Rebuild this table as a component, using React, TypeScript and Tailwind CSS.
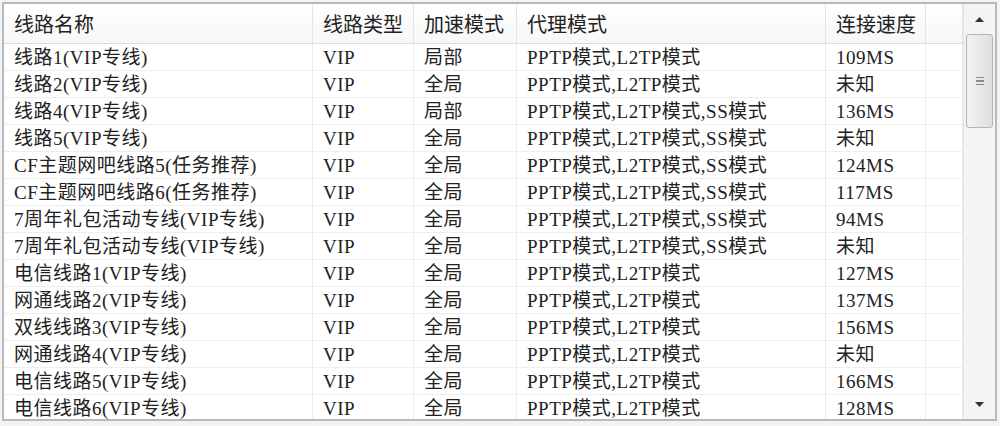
const columns = [
  { title: '线路名称', width: 'w-[309px]' },
  { title: '线路类型', width: 'w-[101px]' },
  { title: '加速模式', width: 'w-[103px]' },
  { title: '代理模式', width: 'w-[309px]' },
  { title: '连接速度', width: 'w-[100px]' },
]

const two = 'PPTP模式,L2TP模式'
const three = 'PPTP模式,L2TP模式,SS模式'

const lines = [
  ['线路1(VIP专线)', 'VIP', '局部', two, '109MS'],
  ['线路2(VIP专线)', 'VIP', '全局', two, '未知'],
  ['线路4(VIP专线)', 'VIP', '局部', three, '136MS'],
  ['线路5(VIP专线)', 'VIP', '全局', three, '未知'],
  ['CF主题网吧线路5(任务推荐)', 'VIP', '全局', three, '124MS'],
  ['CF主题网吧线路6(任务推荐)', 'VIP', '全局', three, '117MS'],
  ['7周年礼包活动专线(VIP专线)', 'VIP', '全局', three, '94MS'],
  ['7周年礼包活动专线(VIP专线)', 'VIP', '全局', three, '未知'],
  ['电信线路1(VIP专线)', 'VIP', '全局', two, '127MS'],
  ['网通线路2(VIP专线)', 'VIP', '全局', two, '137MS'],
  ['双线线路3(VIP专线)', 'VIP', '全局', two, '156MS'],
  ['网通线路4(VIP专线)', 'VIP', '全局', two, '未知'],
  ['电信线路5(VIP专线)', 'VIP', '全局', two, '166MS'],
  ['电信线路6(VIP专线)', 'VIP', '全局', two, '128MS'],
]

function ScrollBar() {
  return (
    <div className="w-[32px] shrink-0 h-full flex flex-col border-l border-[#e6e6e6] bg-[#f4f4f4]">
      <div className="h-[30px] flex items-center justify-center">
        <svg width="9" height="5" viewBox="0 0 9 5">
          <path d="M0 5 L4.5 0 L9 5 Z" fill="#333" />
        </svg>
      </div>
      <div className="mx-[2px] h-[94px] rounded-[3px] border border-[#b4b4b4] bg-gradient-to-r from-[#f2f2f2] via-[#e9e9e9] to-[#dedede] flex items-center justify-center">
        <div className="flex flex-col gap-[2px]">
          <div className="w-[8px] h-[1.5px] bg-[#8a8a8a]" />
          <div className="w-[8px] h-[1.5px] bg-[#8a8a8a]" />
          <div className="w-[8px] h-[1.5px] bg-[#8a8a8a]" />
        </div>
      </div>
      <div className="flex-1" />
      <div className="h-[30px] flex items-center justify-center">
        <svg width="9" height="5" viewBox="0 0 9 5">
          <path d="M0 0 L9 0 L4.5 5 Z" fill="#333" />
        </svg>
      </div>
    </div>
  )
}

export default function App() {
  return (
    <div className="w-[1000px] h-[426px] bg-[#f3f3f3] pt-[2px] pl-[2px]">
      <div
        className="w-[995px] h-[419px] border-2 border-[#b9b9b9] bg-white flex overflow-hidden text-[#222]"
        style={{ fontFamily: '"Liberation Serif", "Noto Sans CJK SC", serif' }}
      >
        <div className="flex-1 overflow-hidden">
          <div className="flex h-[40px] border-b border-[#dcdcdc] bg-gradient-to-b from-white to-[#f7f7f7]">
            {columns.map((col) => (
              <div
                key={col.title}
                className={`${col.width} shrink-0 border-r border-[#e4e4e4] pl-[10px] flex items-center text-[20px]`}
                style={{ fontFamily: '"Noto Sans CJK SC", sans-serif' }}
              >
                {col.title}
              </div>
            ))}
            <div className="flex-1 border-r border-[#e4e4e4]" />
          </div>
          {lines.map((row, i) => (
            <div key={i} className="flex h-[27px] border-b border-[#eeeeee]">
              {row.map((cell, j) => (
                <div
                  key={j}
                  className={`${columns[j].width} shrink-0 border-r border-[#ececec] pl-[10px] flex items-center text-[19px] tracking-[0.5px] whitespace-nowrap overflow-hidden leading-none`}
                >
                  {cell}
                </div>
              ))}
              <div className="flex-1 border-r border-[#ececec]" />
            </div>
          ))}
        </div>
        <ScrollBar />
      </div>
    </div>
  )
}
